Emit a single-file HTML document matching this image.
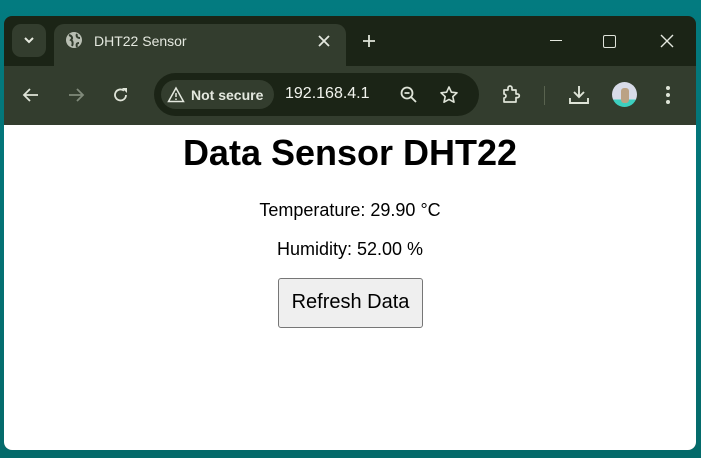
<!DOCTYPE html>
<html><head><style>
*{margin:0;padding:0;box-sizing:border-box}
body{width:701px;height:458px;overflow:hidden;background:linear-gradient(#037b80,#046a6a);font-family:"Liberation Sans",Arial,sans-serif;position:relative}
#win{position:absolute;left:4px;top:16px;width:692px;height:434px;border-radius:8px;overflow:hidden;background:#1b2416}
#tool{position:absolute;left:0;top:50px;width:692px;height:59px;background:#333d2e}
#content{position:absolute;left:0;top:109px;width:692px;height:325px;background:#fff;text-align:center;color:#000}
.ico{position:absolute}
</style></head><body>
<div id="win">
 <div style="position:absolute;left:8px;top:8px;width:34px;height:33px;border-radius:9px;background:#333d2e"></div>
 <svg class="ico" style="left:18px;top:18px" width="14" height="12"><path d="M3 4l4 4 4-4" stroke="#e6eadf" stroke-width="2" fill="none"/></svg>
 <div style="position:absolute;left:50px;top:8px;width:292px;height:44px;border-radius:10px 10px 0 0;background:#333d2e"></div>
 <svg class="ico" style="left:61px;top:15px" width="18" height="18"><circle cx="9" cy="9" r="8" fill="#b9bfb3"/><path d="M4 4c3 1 4 3 2 5 2 1 2 4 1 6M12 3c-1 2 0 4 3 4M14 12c-2 0-3 1-2 4" stroke="#333d2e" stroke-width="2" fill="none"/></svg>
 <div style="position:absolute;left:90px;top:17px;color:#e4e8df;font-size:14px">DHT22 Sensor</div>
 <svg class="ico" style="left:313px;top:18px" width="14" height="14"><path d="M2 2l10 10M12 2L2 12" stroke="#e4e8df" stroke-width="1.8"/></svg>
 <svg class="ico" style="left:357px;top:17px" width="16" height="16"><path d="M8 2v12M2 8h12" stroke="#dfe4d8" stroke-width="1.8"/></svg>
 <div style="position:absolute;left:546px;top:24px;width:12px;height:1px;background:#e4e8df"></div>
 <div style="position:absolute;left:599px;top:19px;width:13px;height:13px;border:1.5px solid #dfe3da;border-radius:2px"></div>
 <svg class="ico" style="left:656px;top:18px" width="14" height="14"><path d="M1 1l12 12M13 1L1 13" stroke="#e4e8df" stroke-width="1.4"/></svg>
 <div id="tool">
  <svg class="ico" style="left:18px;top:21px" width="18" height="16"><path d="M16 8H3M8 2L2 8l6 6" stroke="#dfe4d8" stroke-width="1.8" fill="none"/></svg>
  <svg class="ico" style="left:63px;top:21px" width="18" height="16"><path d="M2 8h13M10 2l6 6-6 6" stroke="#808a7a" stroke-width="1.8" fill="none"/></svg>
  <svg class="ico" style="left:108px;top:20px" width="18" height="18"><path d="M14 9a5.5 5.5 0 1 1-2-4.3" stroke="#dfe4d8" stroke-width="1.8" fill="none"/><path d="M10 2h5v5z" fill="#dfe4d8"/></svg>
  <div style="position:absolute;left:150px;top:7px;width:325px;height:43px;border-radius:22px;background:#1b2416"></div>
  <div style="position:absolute;left:157px;top:14px;width:113px;height:29px;border-radius:15px;background:#333d2e"></div>
  <svg class="ico" style="left:163px;top:20px" width="18" height="17"><path d="M9 2L1.5 15.5h15z" stroke="#e4e8df" stroke-width="1.5" fill="none"/><path d="M9 7v4M9 12.5v1.5" stroke="#e4e8df" stroke-width="1.5"/></svg>
  <div style="position:absolute;left:187px;top:21px;color:#e4e8df;font-size:14px;font-weight:bold">Not secure</div>
  <div style="position:absolute;left:281px;top:19px;color:#f2f4ee;font-size:16px">192.168.4.1</div>
  <svg class="ico" style="left:396px;top:20px" width="18" height="18"><circle cx="7" cy="7" r="5.5" stroke="#dfe4d8" stroke-width="1.8" fill="none"/><path d="M4.5 7h5M11 11l5 5" stroke="#dfe4d8" stroke-width="1.8"/></svg>
  <svg class="ico" style="left:435px;top:19px" width="20" height="20"><path d="M10 2l2.4 5.2 5.6.6-4.2 3.8 1.2 5.6L10 14.4 5 17.2l1.2-5.6L2 7.8l5.6-.6z" stroke="#dfe4d8" stroke-width="1.6" fill="none" stroke-linejoin="round"/></svg>
  <svg class="ico" style="left:497px;top:19px" width="22" height="20"><path d="M3 5h4V3a2 2 0 0 1 4 0v2h4v4h1.5a1.8 1.8 0 0 1 0 3.6H15V17H3v-4a2 2 0 0 0 0-4z" stroke="#dfe4d8" stroke-width="1.7" fill="none" stroke-linejoin="round"/></svg>
  <div style="position:absolute;left:540px;top:20px;width:1px;height:19px;background:#59634f"></div>
  <svg class="ico" style="left:564px;top:18px" width="22" height="22"><path d="M11 2v11M6 8l5 5 5-5M2 14v5h18v-5" stroke="#dfe4d8" stroke-width="1.9" fill="none"/></svg>
  <div style="position:absolute;left:608px;top:16px;width:25px;height:25px;border-radius:50%;background:linear-gradient(#d8dbe8 70%,#3dcfbf 70%);overflow:hidden"><div style="position:absolute;left:9px;top:6px;width:8px;height:15px;background:#bba284;border-radius:3px"></div></div>
  <svg class="ico" style="left:661px;top:19px" width="6" height="20"><circle cx="3" cy="3" r="2" fill="#dfe4d8"/><circle cx="3" cy="10" r="2" fill="#dfe4d8"/><circle cx="3" cy="17" r="2" fill="#dfe4d8"/></svg>
 </div>
 <div id="content">
  <div style="position:absolute;left:0;width:692px;top:7px;font-size:36px;font-weight:bold">Data Sensor DHT22</div>
  <div style="position:absolute;left:0;width:692px;top:75px;font-size:18px">Temperature: 29.90 °C</div>
  <div style="position:absolute;left:0;width:692px;top:114px;font-size:18px">Humidity: 52.00 %</div>
  <div style="position:absolute;left:274px;top:153px;width:145px;height:50px;border:1px solid #767676;border-radius:3px;background:#efefef;font-size:20px;line-height:46px">Refresh Data</div>
 </div>
</div>
</body></html>
